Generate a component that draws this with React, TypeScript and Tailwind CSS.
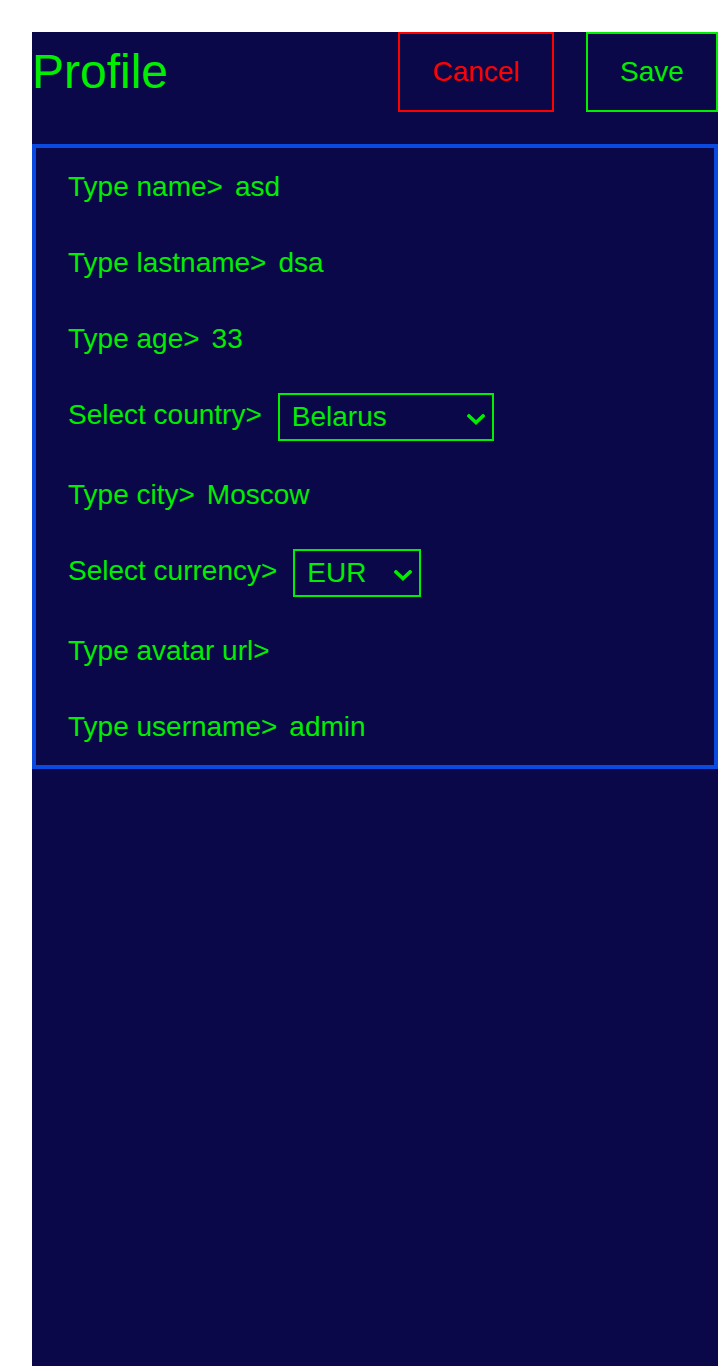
import { useState } from 'react';

const COUNTRIES = ['Russia', 'Belarus', 'Ukraine', 'Kazakhstan', 'Armenia'];
const CURRENCIES = ['RUB', 'EUR', 'USD'];

function Row({ label, children }: { label: string; children?: React.ReactNode }) {
  return (
    <div className="flex items-start gap-3">
      <span className="leading-[44px] whitespace-nowrap">{label}</span>
      {children}
    </div>
  );
}

function Value({ value }: { value: string }) {
  return <span className="leading-[44px] whitespace-nowrap">{value}</span>;
}

function Select({
  value,
  options,
  onChange,
  width,
}: {
  value: string;
  options: string[];
  onChange: (v: string) => void;
  width: string;
}) {
  return (
    <div className={`relative ml-1 ${width}`}>
      <select
        value={value}
        onChange={(e) => onChange(e.target.value)}
        className="appearance-none w-full h-12 pl-3 pr-8 border-2 border-[#00ee00] bg-[#0a0848] text-[#00ee00] text-[28px] leading-[44px] outline-none"
      >
        {options.map((o) => <option key={o} value={o}>{o}</option>)}
      </select>
      <svg
        className="absolute right-[9px] top-[21px] pointer-events-none"
        width="18"
        height="11"
        viewBox="0 0 18 11"
        fill="none"
      >
        <path d="M2 2L9 8.5L16 2" stroke="#00ee00" strokeWidth="3.6" strokeLinecap="square" />
      </svg>
    </div>
  );
}

export default function App() {
  const [country, setCountry] = useState('Belarus');
  const [currency, setCurrency] = useState('EUR');

  return (
    <div className="min-h-screen bg-white pl-8 pt-8" style={{ fontFamily: '"Liberation Sans", Arial, sans-serif' }}>
      <div className="min-h-[calc(100vh-32px)] bg-[#0a0848] text-[#00ee00]">
        <div className="flex items-center justify-between mb-8">
          <h1 className="text-[48px] leading-none">Profile</h1>
          <div className="flex gap-8">
            <button className="h-20 w-[156px] border-2 border-[#ff0000] text-[#ff0000] text-[28px]">Cancel</button>
            <button className="h-20 w-[132px] border-2 border-[#00ee00] text-[#00ee00] text-[28px]">Save</button>
          </div>
        </div>

        <div className="border-4 border-[#0a4ae0] px-8 pt-[17px] pb-4 flex flex-col gap-8 text-[28px]">
          <Row label="Type name>"><Value value="asd" /></Row>
          <Row label="Type lastname>"><Value value="dsa" /></Row>
          <Row label="Type age>"><Value value="33" /></Row>
          <Row label="Select country>">
            <Select value={country} options={COUNTRIES} onChange={setCountry} width="w-[216px]" />
          </Row>
          <Row label="Type city>"><Value value="Moscow" /></Row>
          <Row label="Select currency>">
            <Select value={currency} options={CURRENCIES} onChange={setCurrency} width="w-[128px]" />
          </Row>
          <Row label="Type avatar url>" />
          <Row label="Type username>"><Value value="admin" /></Row>
        </div>
      </div>
    </div>
  );
}
